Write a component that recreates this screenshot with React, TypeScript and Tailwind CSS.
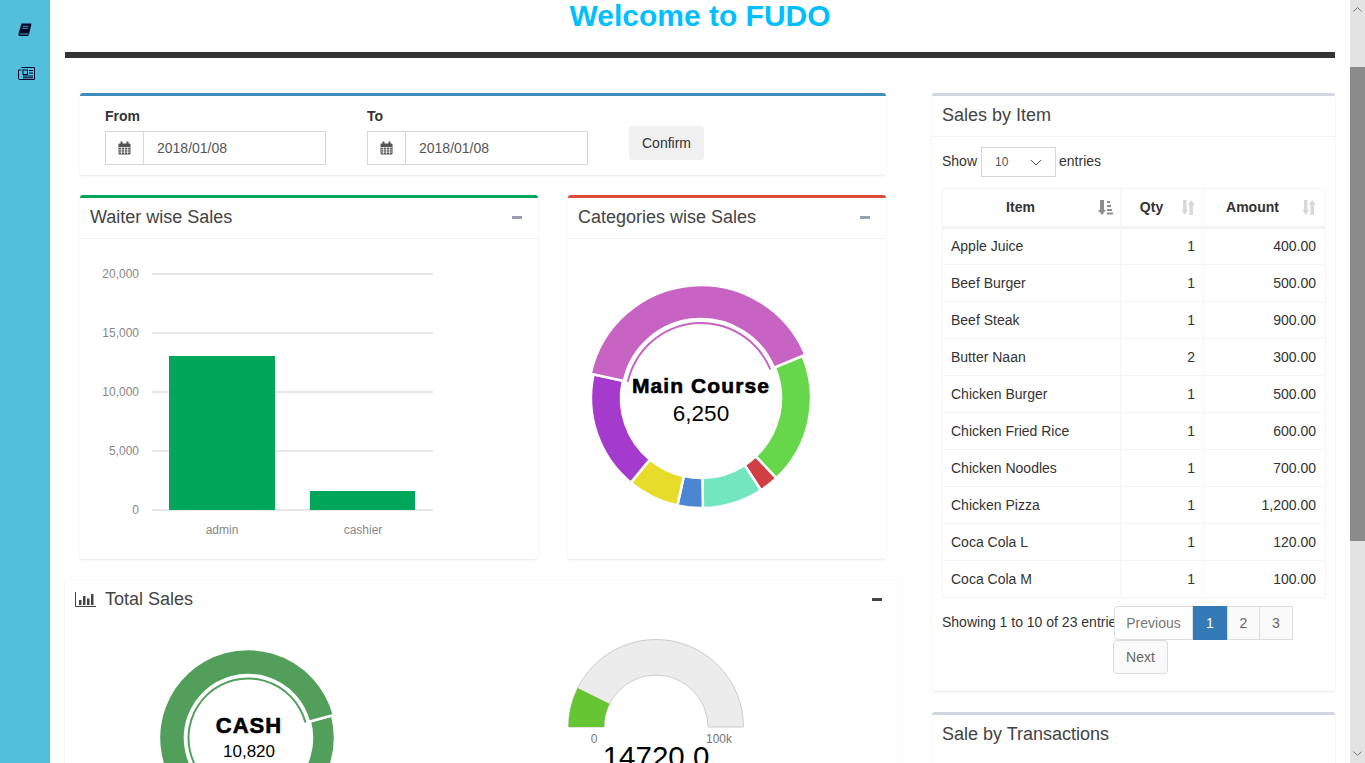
import React from "react";

const font = "font-['Liberation_Sans',Arial,sans-serif]";

const items = [
  ["Apple Juice", "1", "400.00"],
  ["Beef Burger", "1", "500.00"],
  ["Beef Steak", "1", "900.00"],
  ["Butter Naan", "2", "300.00"],
  ["Chicken Burger", "1", "500.00"],
  ["Chicken Fried Rice", "1", "600.00"],
  ["Chicken Noodles", "1", "700.00"],
  ["Chicken Pizza", "1", "1,200.00"],
  ["Coca Cola L", "1", "120.00"],
  ["Coca Cola M", "1", "100.00"],
];

const heads = [
  { label: "Item", cell: "pr-[22px]", icon: "right-[7px]" },
  { label: "Qty", cell: "pr-[21px]", icon: "right-[8px]" },
  { label: "Amount", cell: "pr-[24px]", icon: "right-[9px]" },
];

const polar = (cx: number, cy: number, r: number, deg: number) => {
  const a = (deg * Math.PI) / 180;
  return [cx + r * Math.sin(a), cy - r * Math.cos(a)];
};

// ring slice, angles are clockwise from 12 o'clock
const slice = (cx: number, cy: number, r0: number, r1: number, from: number, to: number) => {
  const large = to - from > 180 ? 1 : 0;
  const [ax, ay] = polar(cx, cy, r1, from);
  const [bx, by] = polar(cx, cy, r1, to);
  const [c, d] = polar(cx, cy, r0, to);
  const [e, f] = polar(cx, cy, r0, from);
  return `M${ax} ${ay}A${r1} ${r1} 0 ${large} 1 ${bx} ${by}L${c} ${d}A${r0} ${r0} 0 ${large} 0 ${e} ${f}Z`;
};

const CalendarIcon = () => (
  <svg width="13" height="14" viewBox="0 0 13 14" className="text-[#555]" fill="none">
    <rect x="0.5" y="2.5" width="12" height="11" fill="currentColor" rx="1" />
    <rect x="2.5" y="0.5" width="2" height="3" fill="currentColor" />
    <rect x="8.5" y="0.5" width="2" height="3" fill="currentColor" />
    <path d="M1 6.5h11M1 8.8h11M1 11.1h11M3.4 6v7M6.5 6v7M9.6 6v7" stroke="#fff" strokeWidth="0.7" />
  </svg>
);

const SortIcon = ({ active }: { active?: boolean }) =>
  active ? (
    <svg width="15" height="15" viewBox="0 0 15 15" className="text-[#8f8f8f]">
      <path d="M2 0h4v10h2l-4 5-4-5h2z" fill="currentColor" />
      <path d="M9 1h3v2H9zM9 5h4v2H9zM9 9h5v2H9zM9 12.500h6v2H9z" fill="currentColor" />
    </svg>
  ) : (
    <svg width="14" height="15" viewBox="0 0 14 15" className="text-[#d8d8d8]">
      <path d="M2 0h3.500v10h1.500l-3.200 5L.5 10H2z" fill="currentColor" />
      <path d="M8.500 15H12V5h1.800L10.200 0 6.800 5h1.700z" fill="currentColor" />
    </svg>
  );

const Minus = ({ dark }: { dark?: boolean }) => (
  <span className={`block h-[3px] w-[10px] ${dark ? "bg-[#444]" : "bg-[#97a0b3]"}`} />
);

const Box = ({
  title,
  border,
  right,
  flat,
  className,
  children,
}: {
  title: string;
  border: string;
  right?: boolean;
  flat?: boolean;
  className: string;
  children?: React.ReactNode;
}) => (
  <div className={`rounded-[3px] border-t-[3px] bg-white shadow-[0_1px_2px_rgba(0,0,0,0.09),0_0_1px_rgba(0,0,0,0.05)] ${border} ${className}`}>
    <div className={`flex h-[41px] items-center justify-between pl-[10px] pr-[16px] ${flat ? "pb-[4px]" : "border-b border-[#f4f4f4] pb-[2px]"}`}>
      <h3 className="text-[18px] leading-none text-[#444]">{title}</h3>
      {right && <Minus />}
    </div>
    {children}
  </div>
);

const DateField = ({ label }: { label: string }) => (
  <div className="w-[221px]">
    <label className="mb-[5px] block text-[14px] font-bold leading-[20px] text-[#333]">{label}</label>
    <div className="flex h-[34px] border border-[#d2d6de] text-[14px] text-[#555]">
      <span className="flex w-[38px] items-center justify-center border-r border-[#d2d6de]">
        <CalendarIcon />
      </span>
      <span className="flex items-center pl-[13px]">2018/01/08</span>
    </div>
  </div>
);

const BarChart = () => (
  <svg width="458" height="320" viewBox="0 0 458 320" className="block">
    {[
      ["20,000", 35],
      ["15,000", 94],
      ["10,000", 153],
      ["5,000", 212],
      ["0", 271],
    ].map(([label, y]) => (
      <g key={label}>
        <line x1="72" x2="353" y1={y} y2={y} stroke="#e7e7e7" strokeWidth="2" />
        <text x="59" y={Number(y) + 4} textAnchor="end" fontSize="12" fill="#888">
          {label}
        </text>
      </g>
    ))}
    <rect x="89" y="117" width="106" height="154" fill="#00a65a" />
    <rect x="230" y="252" width="105" height="19" fill="#00a65a" />
    <text x="142" y="295" textAnchor="middle" fontSize="12" fill="#888">admin</text>
    <text x="283" y="295" textAnchor="middle" fontSize="12" fill="#888">cashier</text>
  </svg>
);

const CategoryDonut = () => {
  const cx = 133;
  const cy = 159;
  const parts: [number, number, string][] = [
    [67.5, 136.8, "#66d74b"],
    [136.8, 147, "#cf3f44"],
    [147, 179, "#73e6bf"],
    [179, 192.4, "#4a86d1"],
    [192.4, 219.7, "#e8dc2a"],
    [219.7, 282.4, "#a53bcd"],
  ];
  return (
    <svg width="318" height="320" viewBox="0 0 318 320" className="block">
      {parts.map(([a, b, c]) => (
        <path key={c} d={slice(cx, cy, 80, 110, a, b)} fill={c} stroke="#fff" strokeWidth="2.5" />
      ))}
      <path d={slice(cx, cy, 79, 113, 282.4, 427.5)} fill="#c763c3" stroke="#fff" strokeWidth="2.5" />
      <path d={slice(cx, cy, 74, 76, 282.4, 427.5)} fill="#c763c3" />
      <text x={cx} y="154" textAnchor="middle" fontSize="21" fontWeight="700" letterSpacing="1.1" stroke="#000" strokeWidth="0.6" fill="#000">
        Main Course
      </text>
      <text x={cx} y="182" textAnchor="middle" fontSize="22.5" fill="#000">6,250</text>
    </svg>
  );
};

const CashDonut = () => {
  const cx = 183;
  const cy = 90;
  return (
    <svg width="370" height="140" viewBox="0 0 370 140" className="block shrink-0">
      <path d={slice(cx, cy, 64, 87, 75, 200)} fill="#529f5c" stroke="#fff" strokeWidth="2.5" />
      <path d={slice(cx, cy, 63, 89, -160, 75)} fill="#529f5c" stroke="#fff" strokeWidth="2.5" />
      <path d={slice(cx, cy, 58.5, 60.5, -160, 75)} fill="#529f5c" />
      <text x={cx + 1} y="85" textAnchor="middle" fontSize="22" fontWeight="700" letterSpacing="1" stroke="#000" strokeWidth="0.6" fill="#000">
        CASH
      </text>
      <text x={cx + 1} y="109" textAnchor="middle" fontSize="17" fill="#000">10,820</text>
    </svg>
  );
};

const Gauge = () => {
  const cx = 106;
  const cy = 90;
  return (
    <svg width="220" height="140" viewBox="0 0 220 140" className="block shrink-0">
      <path d={slice(cx, cy, 52, 87.5, -90, 90)} fill="#ececec" stroke="#ccc" strokeWidth="1" />
      <path d={slice(cx, cy, 52, 87.5, -90, -63.500)} fill="#66c533" />
      <text x="44" y="106" textAnchor="middle" fontSize="12" fill="#777">0</text>
      <text x="169" y="106" textAnchor="middle" fontSize="12" fill="#777">100k</text>
      <text x="106" y="130" textAnchor="middle" fontSize="29.500" fill="#000">14720.0</text>
    </svg>
  );
};

const Scrollbar = () => (
  <div className="flex h-full w-[15px] shrink-0 flex-col bg-[#e3e3e3]">
    <div className="h-[67px] pt-[5px]">
      <svg width="15" height="8" viewBox="0 0 15 8" fill="none">
        <path d="M3.500 6.500l4-4 4 4" stroke="#777" strokeWidth="1" />
      </svg>
    </div>
    <div className="h-[474px] bg-[#8b8b8b]" />
    <div className="flex flex-1 flex-col justify-end pb-[5px]">
      <svg width="15" height="8" viewBox="0 0 15 8" fill="none">
        <path d="M3.500 1.500l4 4 4-4" stroke="#777" strokeWidth="1" />
      </svg>
    </div>
  </div>
);

export default function App() {
  return (
    <div className={`flex h-[763px] overflow-hidden bg-white ${font}`}>
      <aside className="flex w-[50px] shrink-0 flex-col items-center bg-[#52bfdc] pt-[23px]">
        <svg width="14" height="14" viewBox="0 0 14 14" className="block">
          <path d="M3.500 0.500H13.500L11 11.500c-.2.900-.8 1.500-1.800 1.500H1.800C.6 13 .2 12 .6 10.600z" fill="#050525" />
          <path d="M1.800 11h8.700" stroke="#52bfdc" strokeWidth="0.9" />
          <path d="M5 3.300h5.500M4.500 5.300H10" stroke="#52bfdc" strokeWidth="0.8" />
        </svg>
        <svg width="17" height="13" viewBox="0 0 17 13" className="ml-[2px] mt-[30px] block" fill="none">
          <path d="M3.500.500h13v12H1.500a1 1 0 0 1-1-1V3h3" stroke="#05052e" />
          <rect x="5" y="3" width="4.500" height="4.500" stroke="#05052e" />
          <path d="M11 3.500h4M11 6h4M5 9h10M5 10.800h10" stroke="#05052e" />
        </svg>
      </aside>

      <main className="min-w-0 flex-1 px-[15px]">
        <h1 className="h-[31px] text-center text-[30px] font-bold leading-[31px] text-[#00bfff]">Welcome to FUDO</h1>
        <div className="mt-[21px] h-[6px] bg-[#333]" />

        <div className="mt-[35px] flex gap-[30px]">
          <div className="w-[837px] shrink-0">
            <div className="px-[15px]">
              <div className="flex h-[82px] w-[806px] gap-[41px] rounded-[3px] border-t-[3px] border-[#3c8dbc] bg-white pl-[25px] pt-[10px] shadow-[0_1px_2px_rgba(0,0,0,0.09),0_0_1px_rgba(0,0,0,0.05)]">
                <DateField label="From" />
                <DateField label="To" />
                <button className="mt-[20px] h-[34px] w-[75px] rounded-[3px] bg-[#f0f0f0] text-[14px] text-[#333]">Confirm</button>
              </div>
              <div className="mt-[20px] flex gap-[30px]">
                <Box title="Waiter wise Sales" border="border-[#00a65a]" right className="h-[364px] w-[458px]">
                  <BarChart />
                </Box>
                <Box title="Categories wise Sales" border="border-[#dd4b39]" right className="h-[364px] w-[318px]">
                  <CategoryDonut />
                </Box>
              </div>
            </div>

            <section className="mt-[21px] h-[300px] bg-white shadow-[0_0_0_1px_#f8f8f8]">
              <div className="flex h-[38px] items-center justify-between pl-[10px] pr-[20px]">
                <div className="flex items-center gap-[9px]">
                  <svg width="21" height="15" viewBox="0 0 21 15" fill="none" className="text-[#444]">
                    <path d="M.500 0v14.500H21" stroke="currentColor" />
                    <path d="M4 8h2.500v5H4zM8 4h2.500v9H8zM12 6.500h2.500V13H12zM16 2h2.500v11H16z" fill="currentColor" />
                  </svg>
                  <h3 className="text-[18px] leading-none text-[#444]">Total Sales</h3>
                </div>
                <Minus dark />
              </div>
              <div className="mt-[30px] flex">
                <CashDonut />
                <div className="ml-[115px] -mt-[11px]">
                  <Gauge />
                </div>
              </div>
            </section>
          </div>

          <div className="w-[403px] shrink-0">
            <Box title="Sales by Item" border="border-[#d2d6de]" className="h-[598px] w-full">
              <div className="px-[10px] pt-[10px]">
                <div className="flex h-[30px] items-center text-[14px] text-[#333]">
                  <span className="mb-[2px]">Show</span>
                  <span className="ml-[4px] mr-[3px] flex h-[30px] w-[75px] items-center justify-between border border-[#d2d6de] pl-[13px] pr-[13px] text-[12px] text-[#555]">
                    10
                    <svg width="12" height="7" viewBox="0 0 12 7" fill="none">
                      <path d="M1 1l5 5 5-5" stroke="#555" />
                    </svg>
                  </span>
                  <span className="mb-[2px]">entries</span>
                </div>
                <table className="mt-[11px] w-[383px] table-fixed border-collapse text-[14px] text-[#333]">
                  <colgroup>
                    <col className="w-[178px]" />
                    <col className="w-[83px]" />
                    <col className="w-[122px]" />
                  </colgroup>
                  <thead>
                    <tr className="h-[39px]">
                      {heads.map((h, i) => (
                        <th key={h.label} className={`relative border border-b-[3px] border-[#f4f4f4] text-center font-bold ${h.cell}`}>
                          {h.label}
                          <span className={`absolute top-[11px] ${h.icon}`}>
                            <SortIcon active={i === 0} />
                          </span>
                        </th>
                      ))}
                    </tr>
                  </thead>
                  <tbody>
                    {items.map(([name, qty, amount]) => (
                      <tr key={name} className="h-[37px]">
                        <td className="border border-[#f4f4f4] pl-[8px]">{name}</td>
                        <td className="border border-[#f4f4f4] pr-[8px] text-right">{qty}</td>
                        <td className="border border-[#f4f4f4] pr-[9px] text-right">{amount}</td>
                      </tr>
                    ))}
                  </tbody>
                </table>
                <div className="mt-[8px] flex text-[14px]">
                  <div className="w-[172px] shrink-0 overflow-hidden whitespace-nowrap pt-[6px] text-[#333]">Showing 1 to 10 of 23 entries</div>
                  <div className="flex flex-wrap text-[#777]">
                    <span className="flex h-[34px] w-[79px] items-center justify-center rounded-l-[4px] border border-[#ddd] bg-white">Previous</span>
                    <span className="flex h-[34px] w-[34px] items-center justify-center bg-[#337ab7] text-white">1</span>
                    <span className="flex h-[34px] w-[33px] items-center justify-center border border-[#ddd] bg-[#fafafa] text-[#666]">2</span>
                    <span className="-ml-px flex h-[34px] w-[34px] items-center justify-center border border-[#ddd] bg-[#fafafa] text-[#666]">3</span>
                    <span className="-ml-px flex h-[34px] w-[55px] items-center justify-center rounded-[4px] border border-[#ddd] bg-[#fafafa] text-[#666]">Next</span>
                  </div>
                </div>
              </div>
            </Box>
            <Box title="Sale by Transactions" border="border-[#d2d6de]" flat className="mt-[21px] h-[200px] w-full" />
          </div>
        </div>
      </main>

      <Scrollbar />
    </div>
  );
}
